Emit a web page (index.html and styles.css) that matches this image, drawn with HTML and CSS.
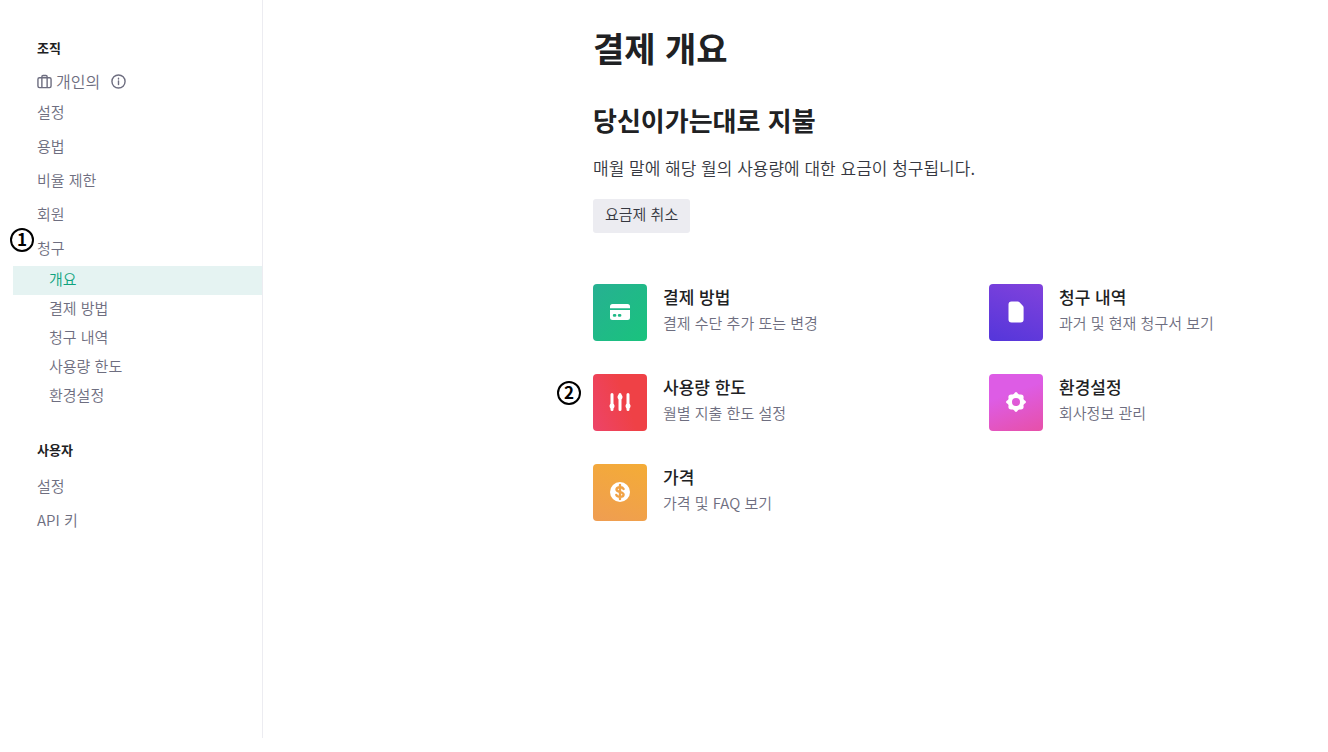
FILE: index.html
```html
<!DOCTYPE html>
<html lang="ko">
<head>
<meta charset="utf-8">
<title>결제 개요</title>
<link rel="stylesheet" href="styles.css">
</head>
<body>
<div class="page">
  <nav class="sidebar">
    <h2 class="nav-heading">조직</h2>
    <div class="org">
      <svg class="org-icon" viewBox="0 0 16 16" aria-hidden="true"><rect x="1" y="4" width="14" height="10.500" rx="1.600"/><path d="M5.200 14.300V2.900c0-.8.5-1.300 1.300-1.300h3c.8 0 1.300.5 1.300 1.300v11.400"/></svg>
      <span class="org-name">개인의</span>
      <svg class="info-icon" viewBox="0 0 16 16" aria-hidden="true"><circle cx="8" cy="8" r="7"/><path d="M8 7.300v4M8 4.500v.8"/></svg>
    </div>
    <ul class="nav-list">
      <li><a class="nav-link" href="#settings">설정</a></li>
      <li><a class="nav-link" href="#usage">용법</a></li>
      <li><a class="nav-link" href="#rate-limits">비율 제한</a></li>
      <li><a class="nav-link" href="#members">회원</a></li>
      <li class="marked"><span class="marker marker-nav">1</span><a class="nav-link" href="#billing">청구</a></li>
    </ul>
    <ul class="sub-list">
      <li><a class="sub-link active" href="#overview" aria-current="page">개요</a></li>
      <li><a class="sub-link" href="#payment-methods">결제 방법</a></li>
      <li><a class="sub-link" href="#history">청구 내역</a></li>
      <li><a class="sub-link" href="#limits">사용량 한도</a></li>
      <li><a class="sub-link" href="#preferences">환경설정</a></li>
    </ul>
    <h2 class="nav-heading user-heading">사용자</h2>
    <ul class="nav-list">
      <li><a class="nav-link" href="#user-settings">설정</a></li>
      <li><a class="nav-link" href="#api-keys">API 키</a></li>
    </ul>
  </nav>
  <main class="content">
    <h1 class="title">결제 개요</h1>
    <h2 class="plan">당신이가는대로 지불</h2>
    <p class="description">매월 말에 해당 월의 사용량에 대한 요금이 청구됩니다.</p>
    <button class="cancel" type="button">요금제 취소</button>
    <div class="cards">
      <a class="card" href="#payment-methods">
        <span class="tile green"><svg viewBox="0 0 24 24" aria-hidden="true"><path d="M4.500 4h15A2.500 2.500 0 0 1 22 6.500V8.300H2V6.500A2.500 2.500 0 0 1 4.500 4z"/><path fill-rule="evenodd" d="M2 10h20v7.500a2.500 2.500 0 0 1-2.500 2.500h-15A2.500 2.500 0 0 1 2 17.500zM6.200 14a1.400 1.400 0 0 0 0 2.800h.8a1.400 1.400 0 0 0 0-2.800zM11.200 14a1.400 1.400 0 0 0 0 2.800h.8a1.400 1.400 0 0 0 0-2.800z"/></svg></span>
        <span class="card-text"><strong>결제 방법</strong><span>결제 수단 추가 또는 변경</span></span>
      </a>
      <a class="card" href="#history">
        <span class="tile purple"><svg viewBox="0 0 24 24" aria-hidden="true"><path d="M7.500 1.500h6.200c.7 0 1.300.3 1.800.8l3.300 3.400c.5.500.8 1.100.8 1.800v12a3 3 0 0 1-3 3H7.500a3 3 0 0 1-3-3v-15a3 3 0 0 1 3-3z"/></svg></span>
        <span class="card-text"><strong>청구 내역</strong><span>과거 및 현재 청구서 보기</span></span>
      </a>
      <a class="card marked" href="#limits">
        <span class="marker marker-card">2</span>
        <span class="tile red"><svg viewBox="0 0 24 24" aria-hidden="true"><path class="stroke" d="M4 4.500v15M12 4.500v15M20 4.500v15"/><circle cx="4" cy="16" r="2.500"/><circle cx="12" cy="7" r="2.500"/><circle cx="20" cy="16" r="2.500"/></svg></span>
        <span class="card-text"><strong>사용량 한도</strong><span>월별 지출 한도 설정</span></span>
      </a>
      <a class="card" href="#preferences">
        <span class="tile pink"><svg viewBox="0 0 24 24" aria-hidden="true"><path fill-rule="evenodd" d="M10 3.800Q12 .2 14 3.800Q14.900 4.900 16.300 4.400Q19.900 4.100 19.600 7.700Q19.100 9.100 20.200 10Q23.800 12 20.200 14Q19.100 14.900 19.600 16.300Q19.900 19.900 16.300 19.600Q14.900 19.100 14 20.200Q12 23.800 10 20.200Q9.100 19.100 7.700 19.600Q4.100 19.900 4.400 16.300Q4.900 14.900 3.800 14Q.2 12 3.800 10Q4.900 9.100 4.400 7.700Q4.100 4.100 7.700 4.400Q9.100 4.900 10 3.800zM12 8a4 4 0 1 0 0 8a4 4 0 0 0 0-8z"/></svg></span>
        <span class="card-text"><strong>환경설정</strong><span>회사정보 관리</span></span>
      </a>
      <a class="card" href="#pricing">
        <span class="tile orange"><svg viewBox="0 0 24 24" aria-hidden="true"><circle cx="12" cy="12" r="10"/><path class="dollar" d="M15.600 9c-.6-1.300-1.900-1.800-3.600-1.800-2.100 0-3.500.9-3.500 2.400 0 3.400 7.100 1.500 7.100 4.900 0 1.500-1.500 2.400-3.600 2.400-1.800 0-3.200-.7-3.700-2M12 5v14"/></svg></span>
        <span class="card-text"><strong>가격</strong><span>가격 및 FAQ 보기</span></span>
      </a>
    </div>
  </main>
</div>
</body>
</html>
```
FILE: styles.css
```css
* { box-sizing: border-box; }

body {
  margin: 0;
  background: #fff;
  color: #202123;
  font-family: "Noto Sans CJK KR", "Noto Sans", sans-serif;
}

h1, h2, p, ul { margin: 0; padding: 0; }
ul { list-style: none; }
a { color: inherit; text-decoration: none; }

.page {
  display: flex;
  min-height: calc(100vh - 14px);
  margin-bottom: 14px;
}

.sidebar {
  flex: 0 0 263px;
  padding: 38px 0 0 13px;
  border-right: 1px solid #ececf1;
  color: #6e6e80;
}

.nav-heading {
  padding-left: 24px;
  color: #202123;
  font-size: 13px;
  font-weight: 700;
  line-height: 20px;
}

.org {
  display: flex;
  align-items: center;
  height: 24px;
  margin: 11px 0 2px;
  padding-left: 24px;
  font-size: 16px;
  font-weight: 350;
}

.org-icon, .info-icon {
  width: 15px;
  height: 15px;
  fill: none;
  stroke: #6e6e80;
  stroke-width: 1.5;
  stroke-linecap: round;
}

.org-name { margin: 0 11px 0 4px; }

.nav-link, .sub-link {
  display: block;
  padding-left: 24px;
  font-size: 15px;
  font-weight: 350;
  line-height: 34px;
}

.sub-link {
  padding: 0 0 4px 36px;
  line-height: 25px;
}

.sub-link.active {
  background: #e5f3f2;
  color: #10a37f;
}

.sub-list { padding-top: 1px; }

.user-heading { margin: 29px 0 9px; }

.marked { position: relative; }

.marker {
  position: absolute;
  width: 24px;
  height: 24px;
  border: 2px solid #000;
  border-radius: 50%;
  color: #000;
  font-size: 17px;
  font-weight: 700;
  line-height: 18px;
  text-align: center;
}

.marker-nav { left: -3px; top: -3px; }
.marker-card { left: -36px; top: 7px; }

.content {
  flex: 1;
  min-width: 0;
  padding: 24px 24px 0 330px;
}

.title {
  font-size: 34px;
  font-weight: 700;
  line-height: 48px;
}

.plan {
  margin-top: 29px;
  font-size: 26px;
  font-weight: 700;
  line-height: 38px;
}

.description {
  margin-top: 17px;
  color: #353740;
  font-size: 17px;
  font-weight: 350;
  line-height: 24px;
}

.cancel {
  display: block;
  height: 34px;
  margin-top: 19px;
  padding: 0 12px 5px;
  border: 0;
  border-radius: 3px;
  background: #ececf1;
  color: #353740;
  font-family: inherit;
  font-size: 15px;
  font-weight: 350;
}

.cards {
  display: grid;
  grid-template-columns: repeat(2, minmax(0, 1fr));
  gap: 33px 81px;
  margin-top: 51px;
}

.card {
  display: flex;
  gap: 16px;
}

.tile {
  display: flex;
  flex: 0 0 54px;
  align-items: center;
  justify-content: center;
  height: 57px;
  padding-bottom: 1px;
  border-radius: 4px;
}

.tile svg {
  width: 24px;
  height: 24px;
  fill: #fff;
}

.tile .stroke {
  fill: none;
  stroke: #fff;
  stroke-width: 3;
  stroke-linecap: round;
}

.tile .dollar {
  fill: none;
  stroke: #f1a346;
  stroke-width: 2.4;
  stroke-linecap: round;
}

.green { background: linear-gradient(135deg, #27b092, #19c37d); }
.purple { background: linear-gradient(200deg, #8142dc, #5436da); }
.red { background: linear-gradient(70deg, #ed4469, #ef4146 60%); }
.pink { background: linear-gradient(160deg, #dd5ce5 35%, #e750a8); }
.orange { background: linear-gradient(200deg, #f4ac36, #ef9d52); }

.card-text {
  display: flex;
  flex-direction: column;
  color: #6e6e80;
  font-size: 15px;
  font-weight: 350;
  line-height: 26px;
}

.card-text strong {
  color: #202123;
  font-size: 17px;
  font-weight: 500;
}
```
